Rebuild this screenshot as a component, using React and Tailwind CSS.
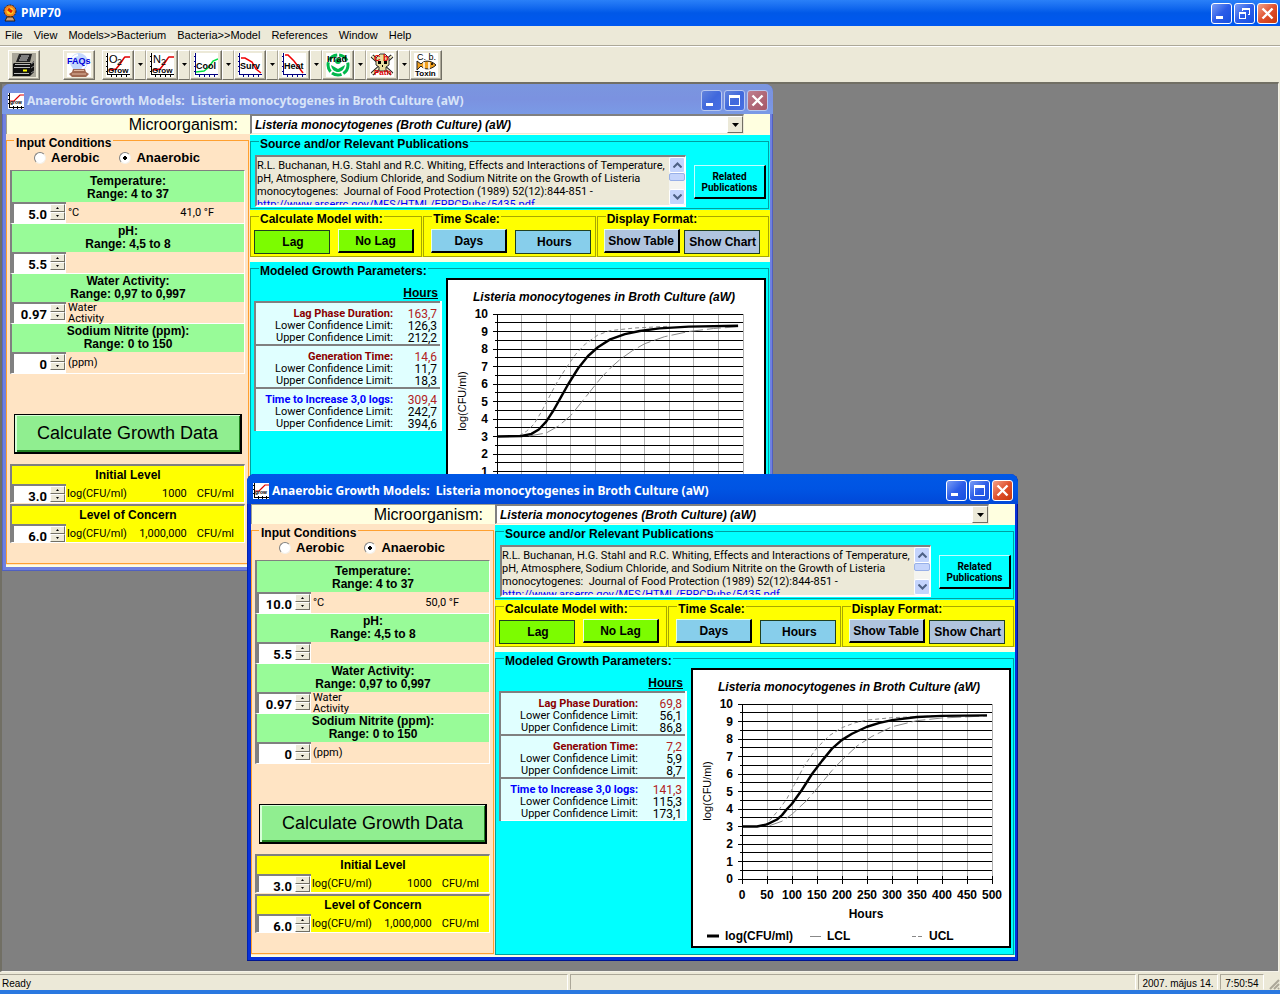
import React, { useId, useState } from 'react';
import clsx from 'clsx';

// Modelled curves, as [x in percent of the time axis, log(CFU/ml)]
const slowCurves = {
  fit: [[0, 3], [10, 3.03], [14, 3.15], [17, 3.4], [20, 3.85], [23, 4.5], [26, 5.25], [29, 6], [33, 6.9], [37, 7.6], [41, 8.1], [46, 8.55], [52, 8.85], [58, 9.03], [66, 9.18], [78, 9.28], [98, 9.33]],
  lcl: [[13, 3.03], [20, 3.2], [25, 3.6], [30, 4.2], [34, 4.9], [38, 5.6], [42, 6.3], [46, 6.9], [50, 7.4], [55, 7.9], [60, 8.3], [68, 8.7], [78, 9], [88, 9.17], [98, 9.27]],
  ucl: [[9, 3.05], [12, 3.3], [15, 3.7], [18, 4.4], [21, 5.2], [24, 6], [28, 6.9], [32, 7.7], [36, 8.3], [41, 8.8], [46, 9.05], [56, 9.2], [70, 9.3]],
};

const fastCurves = {
  fit: [[0, 3], [6, 3], [10, 3.12], [14, 3.4], [16, 3.65], [18, 4], [20, 4.3], [24, 5.1], [28, 6], [32, 6.75], [36, 7.45], [40, 7.95], [44, 8.3], [50, 8.7], [55, 8.92], [60, 9.08], [70, 9.26], [80, 9.32], [98, 9.35]],
  lcl: [[11, 3.05], [16, 3.3], [20, 3.7], [26, 4.5], [29, 5], [36, 6.2], [40, 6.8], [46, 7.6], [52, 8.15], [60, 8.7], [70, 9.05], [80, 9.2], [98, 9.32]],
  ucl: [[9, 3.05], [12, 3.5], [15, 4], [18, 4.6], [21, 5.4], [25, 6.5], [30, 7.5], [35, 8.2], [40, 8.65], [45, 8.92], [50, 9.08], [60, 9.22], [80, 9.33]],
};

const models = [
  {
    id: 'model-5c',
    place: 'left-0 top-0',
    active: false,
    temperature: 5,
    fahrenheit: '41,0 °F',
    results: [
      { name: 'Lag Phase Duration:', value: '163,7', lower: '126,3', upper: '212,2' },
      { name: 'Generation Time:', value: '14,6', lower: '11,7', upper: '18,3' },
      { name: 'Time to Increase 3,0 logs:', value: '309,4', lower: '242,7', upper: '394,6', blue: true },
    ],
    maxHours: 1000,
    plotWidth: 246,
    curves: slowCurves,
  },
  {
    id: 'model-10c',
    place: 'left-[245px] top-[390px]',
    active: true,
    temperature: 10,
    fahrenheit: '50,0 °F',
    results: [
      { name: 'Lag Phase Duration:', value: '69,8', lower: '56,1', upper: '86,8' },
      { name: 'Generation Time:', value: '7,2', lower: '5,9', upper: '8,7' },
      { name: 'Time to Increase 3,0 logs:', value: '141,3', lower: '115,3', upper: '173,1', blue: true },
    ],
    maxHours: 500,
    plotWidth: 250,
    curves: fastCurves,
  },
];

const menus = ['File', 'View', 'Models>>Bacterium', 'Bacteria>>Model', 'References', 'Window', 'Help'];

const CaptionButton = ({ kind, active = true }) => (
  <button
    type="button"
    aria-label={kind}
    className={clsx(
      'flex h-[21px] w-[21px] items-center justify-center rounded-[3px] border',
      active ? 'border-white' : 'border-[#b8c8f0]',
      kind === 'close' && active && 'bg-linear-to-br from-[#f0a088] via-[#e0502c] to-[#c83808]',
      kind === 'close' && !active && 'bg-linear-to-br from-[#c08090] via-[#b06878] to-[#a85868]',
      kind !== 'close' && active && 'bg-linear-to-br from-[#7c9cf4] via-[#2c5ce8] to-[#1450e0]',
      kind !== 'close' && !active && 'bg-linear-to-br from-[#6484dc] via-[#4068dc] to-[#4870e4]'
    )}
  >
    <svg width="19" height="19" viewBox="0 0 19 19" fill="#fff" shapeRendering="crispEdges">
      {kind === 'minimize' && <path d="M4 12h7v3H4z" />}
      {kind === 'maximize' && <path fillRule="evenodd" d="M4 4h11v11H4zM5 7h9v7H5z" />}
      {kind === 'restore' && (
        <path fillRule="evenodd" d="M7 4h8v7h-2v-1h1V6H8v1H7zM4 8h7v7H4zM5 10h5v4H5z" />
      )}
      {kind === 'close' && (
        <path d="M4.500 4.500l10 10M14.500 4.500l-10 10" stroke="#fff" strokeWidth="2.400" shapeRendering="auto" />
      )}
    </svg>
  </button>
);

const GrowthIcon = () => (
  <svg width="16" height="16" viewBox="0 0 16 16" fontFamily="Liberation Sans, sans-serif">
    <rect width="16" height="16" fill="#fff" />
    <path d="M1.500 0v14.500H16M0 2.500h2M0 6.500h2M0 10.500h2M5.500 13v3M9.500 13v3M13.500 13v3" fill="none" stroke="#000" shapeRendering="crispEdges" />
    <path d="M2 8h4l3-3 3-3h4" fill="none" stroke="#e00000" strokeWidth="1.200" />
    <text x="2" y="11" fontSize="5" fontWeight="bold">grow</text>
  </svg>
);

const ToolButton = ({ label, menu, children }) => (
  <div className="flex">
    <button
      type="button"
      aria-label={label}
      className="flex h-[30px] w-8 items-center justify-center border border-t-white border-r-[#716f64] border-b-[#716f64] border-l-white bg-[#ece9d8] shadow-[inset_-1px_-1px_0_#aca899]"
    >
      <svg width="24" height="24" viewBox="0 0 24 24" fontFamily="Liberation Sans, sans-serif" fontWeight="bold">
        {children}
      </svg>
    </button>
    {menu && (
      <button
        type="button"
        aria-label={`${label} menu`}
        className="flex h-[30px] w-3 items-center justify-center border border-t-white border-r-[#aca899] border-b-[#716f64] border-l-white"
      >
        <svg width="5" height="3" viewBox="0 0 5 3"><path d="M0 0h5L2.500 3z" /></svg>
      </button>
    )}
  </div>
);

const PlotTool = ({ label, top, bottom, curve, color, axis }) => (
  <ToolButton label={label} menu>
    <rect width="24" height="24" fill="#fff" />
    <path
      d="M1.500 0v21.500H24M0 3.500h2M0 8.500h2M0 13.500h2M0 18.500h2M5.500 21v3M10.500 21v3M15.500 21v3M20.500 21v3"
      fill="none"
      stroke={axis}
      strokeWidth="1.500"
      shapeRendering="crispEdges"
    />
    <path d={curve} fill="none" stroke={color} strokeWidth="1.500" />
    {top && <text x="3" y="10" fontSize="11" fontWeight="normal">{top[0]}</text>}
    {top && <text x="11" y="12" fontSize="9" fontWeight="normal">{top[1]}</text>}
    <text x="2" y={top ? 20 : 16} fontSize={top ? 8 : 9}>{bottom}</text>
  </ToolButton>
);

const Toolbar = () => (
  <div className="flex h-9 items-center border-t border-white px-2">
    <ToolButton label="Print">
      <rect width="24" height="24" fill="#aaa79a" />
      <path d="M7 1h13l-2 8H4z" fill="#222" />
      <path d="M9 3h8M8 5h8M7 7h8" stroke="#ddd" />
      <path d="M2 10h18l2-2v11l-4 4H1V11z" fill="#111" />
      <path d="M3 11.500h15M2 14.500h16M2 20.500h15" stroke="#bbb" />
      <path d="M19 11l3-2M19 15l3-2M19 20l3-2" stroke="#888" />
      <path d="M11 17.500h4" stroke="#ff0" strokeWidth="2" />
    </ToolButton>
    <div className="w-[23px]" />
    <ToolButton label="FAQs">
      <rect width="24" height="24" fill="#fff" />
      <circle cx="12" cy="9" r="9" fill="#c4d8fc" />
      <path d="M5 6a8 8 0 0 1 6-4M15 16l4-4" stroke="#fff" strokeWidth="2" fill="none" />
      <path d="M6 16h12l1 3 3 2-3 3H5l-3-3 3-2z" fill="#a06850" />
      <path d="M7 17.500h10M5 21h14" stroke="#e0b8a0" />
      <text x="0" y="11" fontSize="9" fill="#0000d8">FAQs</text>
    </ToolButton>
    <div className="w-[7px]" />
    <PlotTool label="Aerobic growth" top="O2" bottom="Grow" axis="#000" color="#e00000" curve="M3 17l7-1 4-5 4-6 1-1h5" />
    <PlotTool label="Anaerobic growth" top="N2" bottom="Grow" axis="#000" color="#e00000" curve="M3 17l7-1 4-5 4-6 1-1h5" />
    <PlotTool label="Cooling" bottom="Cool" axis="#000080" color="#00e040" curve="M2 19l8-1 5-4 4-6 5-2" />
    <PlotTool label="Survival" bottom="Surv" axis="#000080" color="#f00000" curve="M3 5h4l7 4 4 7 5 4" />
    <PlotTool label="Heat inactivation" bottom="Heat" axis="#000080" color="#f00000" curve="M3 2h3l6 6 9 12" />
    <ToolButton label="Irradiation" menu>
      <rect width="24" height="24" fill="#fff" />
      <circle cx="12" cy="12" r="10" fill="none" stroke="#00b84c" strokeWidth="3" strokeDasharray="10 2" />
      <path d="M5 12c1 5 4 7 7 7s6-2 7-7l-7 4z" fill="#00b84c" />
      <circle cx="12" cy="8" r="3" fill="#00b84c" />
      <text x="1" y="9" fontSize="9">Irrad</text>
    </ToolButton>
    <ToolButton label="C. botulinum" menu>
      <rect width="24" height="24" fill="#fff" />
      <path d="M2 3l20 18M22 3L2 21" stroke="#222" strokeWidth="4" />
      <path d="M2 3l20 18M22 3L2 21" stroke="#f0e8c0" strokeWidth="2" />
      <path d="M6 5l4-4h5l4 4v7l-3 2v4H9v-4l-3-2z" fill="#e8dca0" stroke="#333" />
      <path d="M8 8h3v3H8zM14 8h3v3h-3zM12 12h1v2h-1z" />
      <text x="4" y="8" fontSize="9" fill="#e00000">C b</text>
      <text x="4" y="22" fontSize="8" fill="#e00000">Path</text>
    </ToolButton>
    <ToolButton label="C. botulinum toxin">
      <rect width="24" height="24" fill="#fff" />
      <path d="M3 8l4 3c3-4 10-4 15 1-5 5-12 5-15 1l-4 4z" fill="#f0a020" stroke="#222" />
      <path d="M10 9v7M15 9v7" stroke="#fff" strokeWidth="1.500" />
      <circle cx="18" cy="11" r="1" />
      <text x="3" y="7" fontSize="9" fontWeight="normal">C. b.</text>
      <text x="1" y="23" fontSize="8">Toxin</text>
    </ToolButton>
  </div>
);

const Spinner = ({ label, initial, digits, step }) => {
  const [value, setValue] = useState(initial);
  return (
    <div className="flex h-[21px] w-[54px] shrink-0 border-t-2 border-l-2 border-[#808080] bg-white pr-px">
      <input
        aria-label={label}
        value={value.toFixed(digits)}
        onChange={(e) => setValue(parseFloat(e.target.value) || 0)}
        className="w-[36px] min-w-0 bg-white pt-0.5 pr-[3px] text-right text-[13px] leading-[15px] font-bold outline-none"
      />
      <div className="flex w-[15px] flex-col">
        {[1, -1].map((dir) => (
          <button
            key={dir}
            type="button"
            aria-label={`${label} ${dir > 0 ? 'up' : 'down'}`}
            onClick={() => setValue(value + dir * step)}
            className="flex h-2 items-center justify-center border border-t-white border-r-[#716f64] border-b-[#716f64] border-l-white bg-[#ece9d8]"
          >
            <svg width="3" height="2" viewBox="0 0 3 2"><path d={dir > 0 ? 'M0 2h3L1.500 0z' : 'M0 0h3L1.500 2z'} /></svg>
          </button>
        ))}
      </div>
    </div>
  );
};

const Condition = ({ title, range, first, spinner, children }) => (
  <section className={clsx('border-r border-b border-r-white border-b-white border-l-2 border-l-[#808080]', first && 'border-t border-t-[#808080]')}>
    <h3 className={clsx('bg-[#98fb98] text-center text-[12px] leading-[13px] font-bold', first ? 'h-[31px] pt-1' : 'h-7 pt-px')}>
      {title}<br />{range}
    </h3>
    <div className="flex h-[21px] gap-0.5 font-['Roboto',sans-serif] text-[11px]">
      {spinner}
      {children}
    </div>
  </section>
);

const LevelPanel = ({ title, initial, count }) => (
  <section className="h-[39px] overflow-hidden border-t-2 border-r border-b border-l-2 border-t-[#808080] border-r-white border-b-white border-l-[#808080] bg-[#ffff00]">
    <h3 className="h-[18px] pt-px text-center text-[12px] leading-4 font-bold">{title}</h3>
    <div className="flex font-['Roboto',sans-serif] text-[11px] leading-[19px]">
      <Spinner label={title} initial={initial} digits={1} step={0.1} />
      <span className="pl-px">log(CFU/ml)</span>
      <span className="ml-auto">{count}</span>
      <span className="pr-2.5 pl-2.5">CFU/ml</span>
    </div>
  </section>
);

const InputConditions = ({ model }) => {
  const [atmosphere, setAtmosphere] = useState('Anaerobic');
  const name = useId();
  return (
    <fieldset className="mr-px min-w-0 border border-[#ffa030] px-[3px] pb-5">
      <legend className="ml-1 h-3 px-0.5 text-[12px] leading-[18px] font-bold">Input Conditions</legend>
      <div className="mt-[5px] mb-[5px] flex h-3.5 gap-5 pl-6 text-[13px] leading-[14px] font-bold">
        {['Aerobic', 'Anaerobic'].map((kind) => (
          <label key={kind} className="flex items-center gap-[5px]">
            <input
              type="radio"
              name={name}
              checked={atmosphere === kind}
              onChange={() => setAtmosphere(kind)}
              className="h-3 w-3 appearance-none rounded-full border border-t-[#808080] border-r-[#f4f0e8] border-b-[#f4f0e8] border-l-[#808080] bg-white checked:bg-[radial-gradient(circle,#000_0_2px,#fff_2px)]"
            />
            {kind}
          </label>
        ))}
      </div>
      <Condition
        first
        title="Temperature:"
        range="Range:  4 to 37"
        spinner={<Spinner label="Temperature" initial={model.temperature} digits={1} step={0.5} />}
      >
        <span className="leading-[21px]">°C</span>
        <span className="ml-auto pr-[30px] leading-[21px]">{model.fahrenheit}</span>
      </Condition>
      <Condition title="pH:" range="Range:  4,5 to 8" spinner={<Spinner label="pH" initial={5.5} digits={1} step={0.1} />} />
      <Condition
        title="Water Activity:"
        range="Range:  0,97 to 0,997"
        spinner={<Spinner label="Water Activity" initial={0.97} digits={2} step={0.01} />}
      >
        <span className="leading-[11px]">Water<br />Activity</span>
      </Condition>
      <Condition
        title="Sodium Nitrite (ppm):"
        range="Range:  0 to 150"
        spinner={<Spinner label="Sodium Nitrite" initial={0} digits={0} step={1} />}
      >
        <span className="leading-[22px]">(ppm)</span>
      </Condition>
      <button
        type="button"
        className="mx-1 mt-10 mb-2.5 block h-10 w-[228px] border-t border-r-2 border-b-2 border-l border-black bg-[#90ee90] text-[18px] shadow-[inset_2px_1px_0_#d8ffd8,inset_-1px_-2px_0_#208020]"
      >
        Calculate Growth Data
      </button>
      <div className="flex flex-col gap-px">
        <LevelPanel title="Initial Level" initial={3} count="1000" />
        <LevelPanel title="Level of Concern" initial={6} count="1,000,000" />
      </div>
    </fieldset>
  );
};

const FormButton = ({ pressed, color, children }) => (
  <button
    type="button"
    aria-pressed={pressed}
    className={clsx(
      'h-6 w-[76px] text-[12px] font-bold whitespace-nowrap',
      color,
      pressed
        ? 'mt-px border border-[#204020] pl-0.5'
        : 'border-t border-r-2 border-b-2 border-l border-t-[#e8ffe8] border-r-black border-b-black border-l-[#e8ffe8]'
    )}
  >
    {children}
  </button>
);

const ButtonGroup = ({ title, className, children }) => (
  <fieldset className="h-[47px] min-w-0 flex-1 border border-[#a8a800]">
    <legend className="ml-2 h-3 px-px text-[12px] leading-[18px] font-bold">{title}</legend>
    <div className={clsx('mt-[7px] flex items-start', className)}>{children}</div>
  </fieldset>
);

const Publications = () => (
  <div className="h-[75px] bg-[#00ffff]">
    <fieldset className="mr-px h-[74px] min-w-0 border border-[#00a0a0]">
      <legend className="ml-2 h-3 px-px text-[12px] leading-[18px] font-bold">Source and/or Relevant Publications</legend>
      <div className="mt-2 flex items-start pl-1">
        <div className="flex h-[52px] w-[431px] shrink-0 border-t-2 border-r border-b-2 border-l-2 border-t-[#808080] border-r-white border-b-white border-l-[#808080] bg-[#ece9d8]">
          <p className="h-12 flex-1 overflow-hidden pt-[2px] font-['Roboto',sans-serif] text-[11px] leading-[13px] whitespace-nowrap">
            R.L. Buchanan, H.G. Stahl and R.C. Whiting, Effects and Interactions of Temperature,<br />
            pH, Atmosphere, Sodium Chloride, and Sodium Nitrite on the Growth of Listeria<br />
            monocytogenes:&nbsp; Journal of Food Protection (1989) 52(12):844-851 -<br />
            <a href="#publication" className="text-[#0000ff] underline">http://www.arserrc.gov/MFS/HTML/ERRCPubs/5435.pdf</a>
          </p>
          <div className="flex w-4 flex-col justify-between bg-[#f4f4f0]">
            <button type="button" aria-label="Scroll up" className="flex h-4 items-center justify-center rounded-xs border border-white bg-[#c4d4fc]">
              <svg width="9" height="6" viewBox="0 0 9 6"><path d="M.500 5.500l4-4 4 4" fill="none" stroke="#4d6185" strokeWidth="2" /></svg>
            </button>
            <div className="mb-2 h-2 rounded-xs border border-[#98b0e8] bg-[#c4d4fc]" />
            <button type="button" aria-label="Scroll down" className="flex h-4 items-center justify-center rounded-xs border border-white bg-[#c4d4fc]">
              <svg width="9" height="6" viewBox="0 0 9 6"><path d="M.500 .500l4 4 4-4" fill="none" stroke="#4d6185" strokeWidth="2" /></svg>
            </button>
          </div>
        </div>
        <button
          type="button"
          className="mt-2.5 ml-2 h-[34px] w-[72px] shrink-0 border-t border-r-2 border-b-2 border-l border-t-[#c0ffff] border-r-black border-b-black border-l-[#c0ffff] font-['Roboto',sans-serif] text-[10px] leading-[11px] font-bold"
        >
          Related<br />Publications
        </button>
      </div>
    </fieldset>
  </div>
);

const ResultsTable = ({ results }) => (
  <table className="w-[188px] border-collapse font-['Roboto',sans-serif] text-[11px] leading-3">
    <thead>
      <tr>
        <td />
        <th scope="col" className="h-6 pt-1.5 pr-[3px] text-right font-['Liberation_Sans',sans-serif] text-[12px] underline">Hours</th>
      </tr>
    </thead>
    {results.map((r) => (
      <tbody
        key={r.name}
        className="border-t-2 border-r-2 border-b border-l-2 border-t-[#808080] border-r-white border-b-white border-l-[#808080] bg-[#e0ffff] text-right"
      >
        <tr>
          <th scope="row" className={clsx('h-[18px] pt-1 text-right', r.blue ? 'text-[#0000ff]' : 'text-[#8b0000]')}>{r.name}</th>
          <td className="w-12 pt-1 pr-[3px] text-[12px] text-[#b22222]">{r.value}</td>
        </tr>
        <tr>
          <th scope="row" className="h-3 text-right font-normal">Lower Confidence Limit:</th>
          <td className="pr-[3px] text-[12px]">{r.lower}</td>
        </tr>
        <tr>
          <th scope="row" className="h-3 text-right font-normal">Upper Confidence Limit:</th>
          <td className="pr-[3px] text-[12px]">{r.upper}</td>
        </tr>
      </tbody>
    ))}
  </table>
);

const GrowthChart = ({ maxHours, plotWidth, curves }) => {
  const right = 51 + plotWidth;
  const px = (x) => 51 + (x * plotWidth) / 100;
  const py = (y) => 211 - y * 17.5;
  const line = (pts) => pts.map(([x, y]) => `${px(x)},${py(y)}`).join(' ');
  const ticks = [0, 1, 2, 3, 4, 5, 6, 7, 8, 9, 10];

  return (
    <svg width="320" height="280" viewBox="0 0 320 280" fontFamily="Liberation Sans, sans-serif" fontSize="12" fontWeight="bold">
      <rect x="1" y="1" width="318" height="278" fill="#fff" stroke="#000" strokeWidth="2" />
      <text x="158" y="23" textAnchor="middle" fontStyle="italic">Listeria monocytogenes in Broth Culture (aW)</text>
      <g shapeRendering="crispEdges">
        {ticks.map((t) => (
          <line key={t} x1={px(t * 10)} x2={px(t * 10)} y1={py(10)} y2={py(0)} stroke={t ? '#b0b0b0' : '#000'} />
        ))}
        {ticks.map((t) => (
          <line key={t} x1={px(t * 10)} x2={px(t * 10)} y1={py(0) - 3} y2={py(0) + 5} stroke="#000" />
        ))}
        {ticks.map((t) => (
          <line key={t} x1="47" x2={right} y1={py(t)} y2={py(t)} stroke="#000" />
        ))}
        {ticks.slice(1).map((t) => (
          <line key={t} x1="49" x2={right} y1={py(t - 0.5)} y2={py(t - 0.5)} stroke="#000" />
        ))}
      </g>
      <polyline points={line(curves.lcl)} fill="none" stroke="#888" strokeDasharray="14 4" />
      <polyline points={line(curves.ucl)} fill="none" stroke="#888" strokeDasharray="4 3" />
      <polyline points={line(curves.fit)} fill="none" stroke="#000" strokeWidth="2.400" strokeLinejoin="round" />
      {ticks.map((t) => (
        <text key={t} x="42" y={py(t) + 4} textAnchor="end">{t}</text>
      ))}
      {ticks.map((t) => (
        <text key={t} x={px(t * 10)} y="231" textAnchor="middle">{(t * maxHours) / 10}</text>
      ))}
      <text x="175" y="250" textAnchor="middle">Hours</text>
      <text transform="translate(20 123) rotate(-90)" textAnchor="middle" fontSize="11" fontWeight="normal">log(CFU/ml)</text>
      <path d="M16 268h12" stroke="#000" strokeWidth="3" />
      <path d="M119 268.500h11" stroke="#888" />
      <path d="M221 268.500h4M227 268.500h4" stroke="#888" />
      <text x="34" y="272">log(CFU/ml)</text>
      <text x="136" y="272">LCL</text>
      <text x="238" y="272">UCL</text>
    </svg>
  );
};

const ModelWindow = ({ model }) => {
  const { active, place, results, maxHours, plotWidth, curves, id } = model;
  return (
    <section
      className={clsx(
        'absolute w-[771px] rounded-t-lg pr-[3px] pb-1 pl-1',
        place,
        active ? 'bg-[#0831d9] shadow-[inset_-1px_-1px_0_#001590,inset_1px_0_0_#0022b0]' : 'bg-[#7080e0] shadow-[inset_-1px_-1px_0_#5060c0,inset_1px_0_0_#5868c8]'
      )}
    >
      <header
        className={clsx(
          '-mr-[3px] -ml-1 flex h-[30px] items-center rounded-t-lg pt-[3px] pr-[5px] pl-1.5',
          active
            ? 'bg-linear-to-b from-[#0058e6] via-[#0054e3] to-[#0148d8]'
            : 'bg-linear-to-b from-[#7a96df] via-[#7b92e0] to-[#7a9ae6]'
        )}
      >
        <GrowthIcon />
        <h2 className={clsx('flex-1 pl-[3px] font-["Noto_Sans",sans-serif] text-[12px] font-bold whitespace-pre', active ? 'text-white' : 'text-[#d8e4f8]')}>
          {'Anaerobic Growth Models:  Listeria monocytogenes in Broth Culture (aW)'}
        </h2>
        <div className="flex gap-0.5">
          <CaptionButton kind="minimize" active={active} />
          <CaptionButton kind="maximize" active={active} />
          <CaptionButton kind="close" active={active} />
        </div>
      </header>
      <div className="flex bg-[#ffffe0] pb-0.5">
        <div className="flex w-[244px] flex-col bg-[#ffe4c4]">
          <label htmlFor={id} className="h-5 border-t border-l border-t-[#a0a090] border-l-[#a0a090] bg-[#ffffe0] pr-3 text-right text-[16px] leading-5">
            Microorganism:
          </label>
          <InputConditions model={model} />
        </div>
        <div className="flex min-w-0 flex-1 flex-col">
          <div className="mb-px flex h-5 w-[494px] border-t-2 border-r border-b border-l-2 border-t-[#808080] border-r-[#ece9d8] border-b-[#ece9d8] border-l-[#808080] bg-white">
            <select id={id} className="min-w-0 flex-1 appearance-none bg-white pl-[3px] text-[12px] leading-4 font-bold italic outline-none">
              <option>Listeria monocytogenes (Broth Culture) (aW)</option>
            </select>
            <span className="flex w-4 items-center justify-center border border-t-white border-r-[#716f64] border-b-[#716f64] border-l-white bg-[#ece9d8]">
              <svg width="7" height="4" viewBox="0 0 7 4"><path d="M0 0h7L3.500 4z" /></svg>
            </span>
          </div>
          <Publications />
          <div className="mb-[5px] flex gap-px bg-[#ffff00] pr-px">
            <ButtonGroup title="Calculate Model with:" className="gap-2 pl-[3px]">
              <FormButton pressed color="bg-[#7cfc00]">Lag</FormButton>
              <FormButton color="bg-[#7cfc00]">No Lag</FormButton>
            </ButtonGroup>
            <ButtonGroup title="Time Scale:" className="gap-2 pl-[7px]">
              <FormButton color="bg-[#87ceeb]">Days</FormButton>
              <FormButton pressed color="bg-[#87ceeb]">Hours</FormButton>
            </ButtonGroup>
            <ButtonGroup title="Display Format:" className="gap-1 pl-1.5">
              <FormButton color="bg-[#b0c4de]">Show Table</FormButton>
              <FormButton pressed color="bg-[#b0c4de]">Show Chart</FormButton>
            </ButtonGroup>
          </div>
          <div className="flex-1 bg-[#00ffff]">
            <fieldset className="mr-px min-w-0 border border-[#00a0a0] pb-1.5">
              <legend className="ml-2 h-3 px-px text-[12px] leading-[18px] font-bold">Modeled Growth Parameters:</legend>
              <div className="mt-1 flex items-start gap-1 pl-[3px]">
                <ResultsTable results={results} />
                <GrowthChart maxHours={maxHours} plotWidth={plotWidth} curves={curves} />
              </div>
            </fieldset>
          </div>
        </div>
      </div>
    </section>
  );
};

const App = () => (
  <div className="flex min-h-screen flex-col bg-[#ece9d8] font-['Liberation_Sans',sans-serif] text-black">
    <header className="flex h-[26px] items-center bg-linear-to-b from-[#2a80f8] via-[#0058e8] to-[#0058f0] pr-0.5 pl-0.5">
      <svg width="16" height="18" viewBox="0 0 16 18">
        <circle cx="8" cy="7" r="6" fill="#f08020" stroke="#402000" strokeDasharray="2 1" />
        <circle cx="8" cy="7" r="3.500" fill="#ffd020" />
        <path d="M6 5l4 3" stroke="#e02000" strokeWidth="3" />
        <path d="M3 17l2-4h6l2 4z" fill="#c8a080" stroke="#302010" />
      </svg>
      <h1 className='flex-1 pl-[3px] font-["Noto_Sans",sans-serif] text-[12px] font-bold text-white'>PMP70</h1>
      <div className="flex gap-0.5">
        <CaptionButton kind="minimize" />
        <CaptionButton kind="restore" />
        <CaptionButton kind="close" />
      </div>
    </header>
    <nav className="flex h-5 items-center gap-[11px] border-b border-[#aca899] pl-[5px] text-[11px]">
      {menus.map((m) => (
        <button key={m} type="button">{m}</button>
      ))}
    </nav>
    <Toolbar />
    <main className="relative mr-px flex-1 overflow-hidden border-t-2 border-r border-b border-l-2 border-t-[#716f64] border-r-[#f4f2e8] border-b-[#f4f2e8] border-l-[#716f64] bg-[#808080]">
      {models.map((model) => (
        <ModelWindow key={model.id} model={model} />
      ))}
    </main>
    <footer className="flex h-[22px] gap-0.5 border-b-4 border-[#2a78e0] pt-0.5 text-[10px] leading-[17px]">
      <div className="w-[568px] border-t border-r border-[#aca899] border-r-white pl-0.5">Ready</div>
      <div className="flex-1 border border-t-[#aca899] border-r-white border-b-transparent border-l-[#aca899]" />
      <div className="w-20 border border-t-[#aca899] border-r-white border-b-transparent border-l-[#aca899] text-center whitespace-nowrap">2007. május 14.</div>
      <div className="w-11 border border-t-[#aca899] border-r-white border-b-transparent border-l-[#aca899] text-center">7:50:54</div>
      <svg width="14" height="16" viewBox="0 0 14 16"><path d="M4 15L13 6M8 15l5-5M12 15l1-1" stroke="#aca899" strokeWidth="2" /></svg>
    </footer>
  </div>
);

export default App;
